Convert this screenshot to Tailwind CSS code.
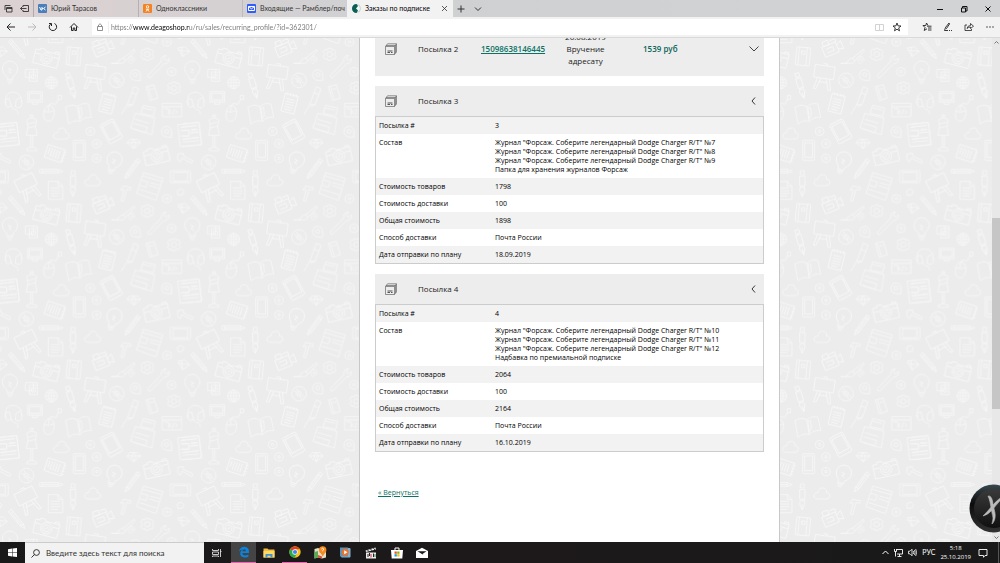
<!DOCTYPE html>
<html lang="ru">
<head>
<meta charset="utf-8">
<title>Заказы по подписке</title>
<script src="https://cdn.jsdelivr.net/npm/@tailwindcss/browser@4"></script>
</head>
<body class="flex h-screen flex-col overflow-hidden bg-white font-['Open_Sans','Noto_Sans',sans-serif] text-[7px] text-[#222]">

<!-- Tab strip -->
<header class="flex h-[17px] shrink-0 items-stretch bg-linear-to-r from-[#dcd1d2] via-[#cfd0d2] via-40% to-[#d2d3d5] font-[Lato,sans-serif] text-[#333]">
  <div class="flex w-[34px] items-center justify-between border-r border-[#b0a9aa] pr-1 pl-1">
    <button aria-label="Отложенные вкладки"><svg class="size-[9px]" viewBox="0 0 9 9" fill="none" stroke="#333" stroke-width=".9"><path d="M1 6V1.500H6.500M2.500 3.500H8V8H2.500ZM2.500 4.500H8"/></svg></button>
    <button aria-label="Отложить вкладки"><svg class="size-[9px]" viewBox="0 0 9 9" fill="none" stroke="#333" stroke-width=".9"><path d="M3 3V1.500H8.500V7.500H3V6M6.500 4.500H.5M2.500 2.500L.5 4.500L2.500 6.500"/></svg></button>
  </div>
  <nav class="flex" aria-label="Вкладки">
    <button class="flex w-[105px] items-center gap-1 border-r border-[#b5b1b2] pl-1">
      <svg class="size-[9px] shrink-0" viewBox="0 0 9 9"><rect width="9" height="9" rx="1" fill="#4a7fbb"/><path d="M1.500 3L3 6H4V3M4 4.500H5M7.500 3L5.500 4.500L7.500 6" fill="none" stroke="#fff"/></svg>
      <span>Юрий Тарасов</span>
    </button>
    <button class="flex w-[104px] items-center gap-1 border-r border-[#bcbcbe] pl-1">
      <svg class="size-[9px] shrink-0" viewBox="0 0 9 9"><rect width="9" height="9" rx="1" fill="#f58220"/><circle cx="4.500" cy="2.800" r="1.200" fill="none" stroke="#fff"/><path d="M2.800 5Q4.500 6 6.200 5M4.500 5.500L3 7.500M4.500 5.500L6 7.500" fill="none" stroke="#fff"/></svg>
      <span>Одноклассники</span>
    </button>
    <button class="flex w-[104px] items-center gap-1 pl-1 whitespace-nowrap">
      <svg class="size-[9px] shrink-0" viewBox="0 0 9 9"><rect width="9" height="9" rx="1" fill="#315efb"/><path d="M1.500 2.500H7.500V6.500H1.500ZM1.500 2.500L4.500 4.800L7.500 2.500" fill="none" stroke="#fff"/></svg>
      <span>Входящие — Рамблер/поч</span>
    </button>
    <button class="flex w-[106px] items-center gap-1 bg-[#f2f2f2] pr-[5px] pl-[5px] text-black">
      <svg class="size-[9px] shrink-0" viewBox="0 0 9 9"><circle cx="4.500" cy="4.500" r="4" fill="#f7f7f7" stroke="#bcd4ce"/><path d="M4.500 0A4.500 4.500 0 0 0 4.500 9L6 6.500L4 4.500L6 2Z" fill="#0b5f55"/></svg>
      <span class="grow text-left">Заказы по подписке</span>
      <svg class="size-[7px]" viewBox="0 0 7 7" stroke="#333" stroke-width=".8"><path d="M1 1L6 6M6 1L1 6"/></svg>
    </button>
  </nav>
  <div class="flex items-center gap-[9px] pl-1">
    <button aria-label="Новая вкладка"><svg class="size-[8px]" viewBox="0 0 8 8" stroke="#333"><path d="M4 .5V7.500M.5 4H7.500"/></svg></button>
    <button aria-label="Список вкладок"><svg class="size-[8px]" viewBox="0 0 8 8" fill="none" stroke="#333"><path d="M1 2.500L4 5.500L7 2.500"/></svg></button>
  </div>
  <div class="ml-auto flex items-center gap-4 pr-2">
    <button aria-label="Свернуть"><svg class="size-[8px]" viewBox="0 0 8 8" stroke="#111"><path d="M1 4.500H7"/></svg></button>
    <button aria-label="Восстановить"><svg class="size-[8px]" viewBox="0 0 8 8" fill="none" stroke="#111"><path d="M1.500 3H5.500V7H1.500ZM2.500 3V1.500H7V6H5.500"/></svg></button>
    <button aria-label="Закрыть"><svg class="size-[8px]" viewBox="0 0 8 8" stroke="#111"><path d="M1.500 1.500L6.500 6.500M6.500 1.500L1.500 6.500"/></svg></button>
  </div>
</header>

<!-- Address bar -->
<div class="flex h-[21px] shrink-0 items-center border-b border-[#d9d9d9] bg-[#f2f2f2] pl-[6px]">
  <div class="flex w-[86px] gap-[11px]">
    <button aria-label="Назад"><svg class="size-[10px]" viewBox="0 0 10 10" fill="none" stroke="#222"><path d="M9 5H1M4.500 1.500L1 5L4.500 8.500"/></svg></button>
    <button aria-label="Вперед"><svg class="size-[10px]" viewBox="0 0 10 10" fill="none" stroke="#bbb"><path d="M1 5H9M5.500 1.500L9 5L5.500 8.500"/></svg></button>
    <button aria-label="Обновить"><svg class="size-[10px]" viewBox="0 0 10 10" fill="none" stroke="#222"><path d="M6.500 1.500A3.700 3.700 0 1 1 3 1.700M3.500 4V1.500H1"/></svg></button>
    <button aria-label="Домой"><svg class="size-[10px]" viewBox="0 0 10 10" fill="none" stroke="#222"><path d="M1 5.500L5 1.500L9 5.500M2.500 4.500V8.500H4.200V6H5.800V8.500H7.500V4.500"/></svg></button>
  </div>
  <div class="flex h-4 grow items-center bg-white pr-[6px] pl-1">
    <svg class="size-[8px] shrink-0" viewBox="0 0 8 8" fill="none" stroke="#777" stroke-width=".8"><path d="M1.500 3.500H6.500V7.500H1.500ZM2.500 3.500V2Q4 -.5 5.500 2V3.500"/></svg>
    <span class="ml-1 h-3 border-l border-[#eee]"></span>
    <input type="text" aria-label="Адрес" value="https://www.deagoshop.ru/ru/sales/recurring_profile/?id=362301/" class="grow bg-[linear-gradient(90deg,#777_24px,#000_24px,#000_80px,#777_80px)] bg-clip-text pl-[2px] font-[Lato,sans-serif] text-[7px] text-transparent outline-none">
    <button aria-label="Режим чтения" class="mr-2"><svg class="size-[9px]" viewBox="0 0 9 9" fill="none" stroke="#c8c8c8" stroke-width=".8"><path d="M.5 1.500H4.500V7.500H.5ZM4.500 1.500H8.500V7.500H4.500"/></svg></button>
    <button aria-label="В избранное"><svg class="size-[10px]" viewBox="0 0 10 10" fill="none" stroke="#222" stroke-width=".9"><path d="M5 1L6.100 3.900L9 4L6.700 5.900L7.500 8.800L5 7.200L2.500 8.800L3.300 5.900L1 4L3.900 3.900Z"/></svg></button>
  </div>
  <div class="flex w-[92px] items-center justify-between pr-[5px] pl-[14px]">
    <button aria-label="Избранное"><svg class="size-[10px]" viewBox="0 0 10 10" fill="none" stroke="#222" stroke-width=".9"><path d="M6 3.500L4.500 1L3.800 3.500H1L3 5.500L2.200 8.500L5 6.800M5 4.200H9.500M6 6H9.500M6 8H9.500"/></svg></button>
    <button aria-label="Заметки"><svg class="size-[10px]" viewBox="0 0 10 10" fill="none" stroke="#222" stroke-width=".9"><path d="M6 1L2.500 5.500L3.500 6.500L6.500 2ZM2.500 5.500L1.500 8.500H5M6 8.500H7M8 8.500H9"/></svg></button>
    <button aria-label="Поделиться"><svg class="size-[10px]" viewBox="0 0 10 10" fill="none" stroke="#222" stroke-width=".8"><path d="M3 3H1V8.500H7.500V7M3 6.500Q3.500 3.500 6.500 3.500V1.500L9.500 4.200L6.500 6.500V5Q4.500 5 3 6.500"/></svg></button>
    <button aria-label="Параметры"><svg class="size-[10px]" viewBox="0 0 10 10" fill="#222"><circle cx="2" cy="5" r=".7"/><circle cx="5" cy="5" r=".7"/><circle cx="8" cy="5" r=".7"/></svg></button>
  </div>
</div>

<!-- Page -->
<div class="relative flex min-h-0 grow overflow-hidden">
  <svg class="absolute inset-0 size-full" aria-hidden="true">
    <defs>
      <g id="gear"><path d="M-5 -18H5L7 -13L14 -15L19 -7L15 0L19 7L14 15L7 13L5 18H-5L-7 13L-14 15L-19 7L-15 0L-19 -7L-14 -15L-7 -13Z"/><circle r="8"/></g>
      <g id="cog"><path d="M-4 -12H4L11 -8L13 0L11 8L4 12H-4L-11 8L-13 0L-11 -8Z"/><circle r="4"/></g>
      <g id="camera"><path d="M-37 -20H-24V-26H-10L-5 -20H37V22H-37ZM-37 -8H-18M18 -8H37M22 -20V-26H34V-20"/><circle r="17"/><circle r="10"/><path d="M-4 4L4 -4"/></g>
      <g id="bulb"><path d="M-9 24V16Q-23 6 -23 -8A23 23 0 0 1 23 -8Q23 6 9 16V24ZM-9 29H9M-6 35H6M-6 -8L4 -5L-4 2L5 6"/></g>
      <g id="pencil"><path d="M-5 -34H6V22L0 36L-5 22ZM-5 -26H6M0 -26V22M-5 22H6"/></g>
      <g id="pen"><path d="M-6 -38H6V-26H-6ZM-8 -22H8V8H-8ZM-6 12H6L8 22L0 40L-8 22ZM0 22V40"/></g>
      <g id="easel"><path d="M-30 -28H30V10H-30ZM-6 -34H6V-28M-18 10L-26 44H-18L-8 10M18 10L26 44H18L8 10M-14 22H14"/></g>
      <g id="disc"><circle r="22"/><circle r="7"/><circle r="2"/><path d="M-15 -8L-7 -3M8 4L16 10M-8 -16L-3 -7M3 7L8 17"/></g>
      <g id="book"><path d="M-20 -27H22V27H-20ZM-12 -27V27M12 -27V27M-4 -16H6V-6H-4Z"/></g>
      <g id="video"><path d="M-26 -8H18V24H-26ZM18 2L34 -6V20L18 14M-20 -22H-2V-8H-20ZM2 -18H20V-8M-16 2H6V14H-16"/></g>
      <g id="brush"><path d="M34 -22L2 4L8 12L36 -16ZM2 4Q-12 6 -14 18Q-20 20 -34 20H-8Q8 20 8 12"/></g>
      <g id="wrench"><path d="M-30 28L10 -14Q8 -30 24 -32L18 -22L25 -16L33 -24Q36 -8 18 -6L-22 34Q-30 38 -30 28Z"/></g>
      <g id="cloud"><path d="M-14 15Q-26 12 -22 2Q-18 -6 -11 -4Q-8 -20 6 -18Q17 -14 14 -4Q26 -4 24 8Q22 15 14 15Z"/></g>
      <g id="notes"><path d="M-20 -26H20V28H-20ZM-13 -31V-22M-4 -31V-22M5 -31V-22M14 -31V-22M-13 -12H13M-13 -4H13M-13 4H13M-13 12H13M-13 20H8"/></g>
      <g id="pin"><path d="M0 17Q-16 14 -15 0A15 15 0 0 1 15 0V18Z"/><circle r="6"/></g>
      <g id="tile" fill="none" stroke="#f7f7f7" stroke-width="2.500" stroke-linejoin="round">
        <use href="#pencil" transform="translate(51 40) rotate(-40)"/>
        <use href="#camera" transform="translate(139 67) rotate(14)"/>
        <use href="#book" transform="translate(220 61) rotate(5)"/>
        <use href="#video" transform="translate(304 32) rotate(-22)"/>
        <use href="#brush" transform="translate(368 62)"/>
        <use href="#pin" transform="translate(395 70) rotate(60) scale(.6)"/>
        <use href="#gear" transform="translate(442 55)"/>
        <use href="#wrench" transform="translate(474 90)"/>
        <use href="#cog" transform="translate(501 18)"/>
        <use href="#cog" transform="translate(515 107)"/>
        <path d="M534 36L555 32L569 46L548 62ZM534 42L569 46M545 34L548 60"/>
        <use href="#bulb" transform="translate(30 106)"/>
        <path d="M76 100H100V124H76ZM88 108H112V136H88ZM94 116H106V128H94ZM100 100H112V108"/>
        <g transform="translate(154 140)"><circle r="18"/><ellipse rx="8" ry="18"/><path d="M-18 0H18M-15 -9H15M-15 9H15M0 -18V18"/></g>
        <use href="#pen" transform="translate(213 148) rotate(-16)"/>
        <use href="#easel" transform="translate(284 117) rotate(8)"/>
        <use href="#disc" transform="translate(350 133)"/>
        <use href="#pin" transform="translate(406 116)"/>
        <use href="#gear" transform="translate(522 156)"/>
        <path d="M18 206Q10 168 40 168Q68 172 64 200M18 190Q10 200 22 214L34 210L28 188ZM64 184L48 192L46 212L58 216Q70 206 64 190M34 210Q40 224 48 220Q54 224 54 234"/>
        <path d="M83 167H127V198H83ZM88 172H122V192H88ZM98 198V205H112V198"/>
        <path d="M147 208Q132 212 131 236Q131 256 146 256Q162 252 163 230Q162 210 147 208ZM147 208L145 226M133 226Q146 232 162 224M148 208Q150 200 162 204Q172 206 170 196L178 190M174 178L184 178L184 190L174 190Z"/>
        <path d="M197 214Q216 202 232 212Q248 198 266 204L274 244Q252 242 240 256Q222 250 206 264ZM232 212L240 256M236 216L244 214L246 238L240 248Z"/>
        <use href="#notes" transform="translate(322 202) rotate(14)"/>
        <path d="M402 152L416 158L398 206H382ZM382 206L364 236M398 206L384 212M396 170L410 176"/>
        <path d="M438 152L462 146L474 186L450 194ZM444 152L456 190M450 160L462 158"/>
        <path d="M487 202H545V242H487ZM487 212H545M492 218H506V236M514 222L508 228L514 234M526 222L532 228L526 234M522 220L518 236"/>
        <path d="M430 208L466 216L460 240L422 232ZM406 232L464 246L456 296L392 276ZM406 250L448 262M402 262L442 274L436 290L398 278M430 216L458 222"/>
        <path d="M-14 266L50 259L58 326L-6 332ZM-8 274L44 268M-6 284L20 282V300H-6M26 282L46 280M26 290L48 288M0 310L50 304M2 318L50 314"/>
        <path d="M533 266L597 259L605 326L541 332ZM541 274L591 268M541 284H567V300H541M573 282L593 280M573 290L595 288M547 310L597 304"/>
        <path d="M90 242H100L98 236H92ZM80 252Q96 240 110 252L106 270L111 298H79L84 270ZM84 264L106 258M84 276L108 270M92 300V334M98 300V334M80 344V338L92 334H98L110 338V344Z"/>
        <use href="#cloud" transform="translate(183 294)"/>
        <use href="#cog" transform="translate(271 286)"/>
        <g transform="translate(334 286) rotate(-28)"><rect x="-22" y="-32" width="44" height="64" rx="4"/><rect x="-17" y="-25" width="34" height="46"/></g>
        <use href="#pin" transform="translate(500 286)"/>
        <use href="#cog" transform="translate(290 323)"/><use href="#cog" transform="translate(290 367)"/>
        <path d="M381 320L389 310H413L422 320L402 338ZM381 320H422M395 320L402 338L408 320L401 310Z"/>
        <use href="#camera" transform="translate(470 360) rotate(-12)"/>
        <use href="#notes" transform="translate(165 353) rotate(108)"/>
        <g transform="translate(238 343)"><rect x="-18" y="-30" width="36" height="60" rx="4"/><rect x="-12" y="-23" width="24" height="44"/></g>
        <use href="#bulb" transform="translate(341 378) rotate(18)"/>
        <use href="#disc" transform="translate(79 379)"/>
        <use href="#pencil" transform="translate(396 398) rotate(36)"/>
        <use href="#pencil" transform="translate(153 406) rotate(-90)"/>
        <path d="M533 354L550 352V360L579 374L576 382L546 366L540 378L533 370Z"/>
        <use href="#easel" transform="translate(81 448) rotate(-26)"/>
        <path d="M145 436H174L188 450V490H145ZM174 436V450H188M152 456H180M152 464H180M152 472H180M152 480H174"/>
        <use href="#pen" transform="translate(219 442)"/>
        <use href="#cloud" transform="translate(277 434)"/>
        <path d="M430 410L489 427L468 493L410 472ZM428 420L484 436M424 432L444 438L438 454L420 448M450 440L480 448M448 448L478 458M418 460L470 476"/>
        <path d="M362 462L370 450L392 454V462L380 460L370 496L363 494L372 460Z"/>
        <rect x="511" y="404" width="61" height="36" rx="4"/><rect x="520" y="409" width="43" height="26"/>
        <path d="M532 464L544 458L552 466L548 476L534 478Z"/>
      </g>
      <pattern id="doodles" width="547" height="470" patternUnits="userSpaceOnUse" patternTransform="translate(0 -2) scale(.33333)">
        <use href="#tile"/><use href="#tile" x="-547"/><use href="#tile" y="-470"/><use href="#tile" x="-547" y="-470"/>
      </pattern>
    </defs>
    <rect width="100%" height="100%" fill="#ececec"/>
    <rect width="100%" height="100%" fill="url(#doodles)"/>
  </svg>

  <svg class="hidden"><symbol id="parcel" viewBox="0 0 12 12"><path d="M.5 3.500H9.500V11.500H.5ZM.5 3.500L2.500 .8H11.500L9.500 3.500M11.500 .8V9L9.500 11.500M1 2.500H10.500V10" fill="none" stroke="#666" stroke-width=".7"/><path d="M2.500 8H7.500M2.500 9.500H5M6 9.500H7.500" stroke="#555" stroke-width="1"/></symbol></svg>

  <main class="relative grid min-w-0 grow grid-cols-[359fr_421px_212fr]">
    <div class="col-start-2 flex flex-col gap-[10px] border-x border-[#c8c8c8] bg-white pr-[15px] pl-[15px] font-medium">

      <section class="-mt-4 grid h-[54px] shrink-0 grid-cols-[33px_63px_66px_77px_1fr_10px] items-center bg-[#ededed] pr-[5px] pl-[10px] text-[8px] leading-[12px]">
        <svg class="size-[12px]"><use href="#parcel"/></svg>
        <h2>Посылка 2</h2>
        <a href="#" class="font-semibold text-[#0b7265] underline">15098638146445</a>
        <p class="text-center">26.08.2019<br>Вручение<br>адресату</p>
        <p class="pl-[19px] font-semibold text-[#0b6659]">1539 руб</p>
        <button aria-label="Развернуть"><svg class="size-[10px]" viewBox="0 0 10 10" fill="none" stroke="#333" stroke-width=".9"><path d="M.5 2.500L5 7L9.500 2.500"/></svg></button>
      </section>

      <section>
        <div class="grid h-[30px] grid-cols-[33px_1fr_10px] items-center bg-[#ededed] pr-[5px] pl-[10px] text-[8px]">
          <svg class="size-[12px]"><use href="#parcel"/></svg>
          <h2>Посылка 3</h2>
          <button aria-label="Свернуть"><svg class="size-[10px]" viewBox="0 0 10 10" fill="none" stroke="#222" stroke-width=".9"><path d="M6 1.500L3 5L6 8.500"/></svg></button>
        </div>
        <div class="border border-[#ccc] text-black">
          <table class="w-full text-left leading-[9px] [&_td]:py-1 [&_th]:w-[119px] [&_th]:py-1 [&_th]:pl-[3px] [&_th]:align-top [&_th]:font-medium [&_tr:nth-child(odd)]:bg-[#f2f2f2]">
            <tr><th scope="row">Посылка #</th><td>3</td></tr>
            <tr><th scope="row">Состав</th><td>Журнал "Форсаж. Соберите легендарный Dodge Charger R/T" №7<br>Журнал "Форсаж. Соберите легендарный Dodge Charger R/T" №8<br>Журнал "Форсаж. Соберите легендарный Dodge Charger R/T" №9<br>Папка для хранения журналов Форсаж</td></tr>
            <tr><th scope="row">Стоимость товаров</th><td>1798</td></tr>
            <tr><th scope="row">Стоимость доставки</th><td>100</td></tr>
            <tr><th scope="row">Общая стоимость</th><td>1898</td></tr>
            <tr><th scope="row">Способ доставки</th><td>Почта России</td></tr>
            <tr><th scope="row">Дата отправки по плану</th><td>18.09.2019</td></tr>
          </table>
        </div>
      </section>

      <section>
        <div class="grid h-[30px] grid-cols-[33px_1fr_10px] items-center bg-[#ededed] pr-[5px] pl-[10px] text-[8px]">
          <svg class="size-[12px]"><use href="#parcel"/></svg>
          <h2>Посылка 4</h2>
          <button aria-label="Свернуть"><svg class="size-[10px]" viewBox="0 0 10 10" fill="none" stroke="#222" stroke-width=".9"><path d="M6 1.500L3 5L6 8.500"/></svg></button>
        </div>
        <div class="border border-[#ccc] text-black">
          <table class="w-full text-left leading-[9px] [&_td]:py-1 [&_th]:w-[119px] [&_th]:py-1 [&_th]:pl-[3px] [&_th]:align-top [&_th]:font-medium [&_tr:nth-child(odd)]:bg-[#f2f2f2]">
            <tr><th scope="row">Посылка #</th><td>4</td></tr>
            <tr><th scope="row">Состав</th><td>Журнал "Форсаж. Соберите легендарный Dodge Charger R/T" №10<br>Журнал "Форсаж. Соберите легендарный Dodge Charger R/T" №11<br>Журнал "Форсаж. Соберите легендарный Dodge Charger R/T" №12<br>Надбавка по премиальной подписке</td></tr>
            <tr><th scope="row">Стоимость товаров</th><td>2064</td></tr>
            <tr><th scope="row">Стоимость доставки</th><td>100</td></tr>
            <tr><th scope="row">Общая стоимость</th><td>2164</td></tr>
            <tr><th scope="row">Способ доставки</th><td>Почта России</td></tr>
            <tr><th scope="row">Дата отправки по плану</th><td>16.10.2019</td></tr>
          </table>
        </div>
      </section>

      <p class="pt-[26px] pl-[3px]"><a href="#" class="text-[#0b7265] underline">« Вернуться</a></p>
    </div>
  </main>

  <!-- Scrollbar -->
  <div class="relative flex w-2 shrink-0 flex-col items-center bg-[#e8e8e8]">
    <svg class="my-px size-[7px]" viewBox="0 0 7 7" fill="none" stroke="#777"><path d="M1.500 4.500L3.500 2.500L5.500 4.500"/></svg>
    <div class="flex w-full grow flex-col">
      <div class="grow-171"></div>
      <div class="grow-191 bg-[#c6c6c6]"></div>
      <div class="grow-124"></div>
    </div>
    <svg class="my-px size-[7px]" viewBox="0 0 7 7" fill="none" stroke="#777"><path d="M1.500 2.500L3.500 4.500L5.500 2.500"/></svg>
  </div>

  <!-- Floating desktop widget -->
  <svg class="absolute -right-[18px] bottom-[9px] size-[49px]" viewBox="0 0 49 49" aria-hidden="true">
    <defs><linearGradient id="rim" x2="0" y2="1"><stop stop-color="#39494f"/><stop offset=".4" stop-color="#0c0c0c"/><stop offset="1" stop-color="#333"/></linearGradient><linearGradient id="face" x2="0" y2="1"><stop stop-color="#3a3a3a"/><stop offset="1" stop-color="#101010"/></linearGradient></defs>
    <circle cx="24.500" cy="24.500" r="24" fill="url(#rim)"/>
    <circle cx="24.500" cy="24.500" r="19.500" fill="url(#face)"/>
    <path d="M19 12Q23 11 24 20L26 29Q27 36 23 40Q25 34 23 29L21 18Q20 14 19 12ZM37 11Q30 17 24 25Q19 31 14 32Q19 27 23 22Q29 14 37 11Z" fill="#bbb" stroke="#bbb" stroke-width=".6"/>
  </svg>
</div>

<!-- Taskbar -->
<footer class="flex h-[21px] shrink-0 items-stretch bg-linear-to-r from-[#191919] via-[#1d191a] to-[#191919] text-white">
  <button aria-label="Пуск" class="flex w-[25px] items-center justify-center"><svg class="size-[9px]" viewBox="0 0 9 9" fill="#fff"><path d="M0 1.200L4 .6V4.200H0ZM4.500 .5L9 0V4.200H4.500ZM0 4.800H4V8.400L0 7.800ZM4.500 4.800H9V9L4.500 8.500Z"/></svg></button>
  <label class="flex w-[179px] items-center gap-[6px] border-t border-[#ccc] bg-[#f2f2f2] pl-[6px]">
    <svg class="size-[9px] shrink-0" viewBox="0 0 9 9" fill="none" stroke="#222" stroke-width=".9"><circle cx="5.500" cy="3.500" r="2.900"/><path d="M3.400 5.600L.5 8.500"/></svg>
    <input type="text" aria-label="Поиск" placeholder="Введите здесь текст для поиска" class="w-full font-[Lato,sans-serif] text-[8px] outline-none placeholder:text-[#333]">
  </label>
  <button aria-label="Представление задач" class="flex w-[25px] items-center justify-center"><svg class="size-[10px]" viewBox="0 0 10 10" fill="none" stroke="#ddd" stroke-width=".9"><path d="M.5 1V2.500H6.500V1M.5 4H6.500V6.500H.5ZM.5 9V8H6.500V9M8.500 1V9M8 3.500H9.500"/></svg></button>
  <div class="flex pl-[2px]">
    <button aria-label="Edge" class="flex w-[25px] items-center justify-center border-b border-[#e667b0] bg-[#444]"><svg class="size-[12px]" viewBox="0 0 12 12"><path d="M1 5.500Q2 .8 6.300 .8Q11 1 11 6V7H4.200Q4.500 9.500 7.200 9.500Q9 9.500 10.400 8.600V10.800Q8.600 11.600 6.500 11.500Q2 11 2.200 7Q2.400 4.600 4.600 3.500Q2.500 3.700 1 5.500ZM4.300 5.300H8Q8 3.300 6.300 3.300Q4.600 3.400 4.300 5.300Z" fill="#0a84e0" fill-rule="evenodd"/></svg></button>
    <button aria-label="Проводник" class="flex w-[26px] items-center justify-center"><svg class="size-[12px]" viewBox="0 0 12 12"><path d="M.5 1.500H4.500L5.500 2.500H11.500V10.500H.5Z" fill="#f2bd3f"/><path d="M.5 4H11.500V10.500H.5Z" fill="#ffd968"/><path d="M2.500 10.500V7H9.500V10.500H7.500V8.700H4.500V10.500Z" fill="#3c93d6"/></svg></button>
    <button aria-label="Chrome" class="flex w-[25px] items-center justify-center border-b border-[#e667b0]"><svg class="size-[12px]" viewBox="0 0 12 12"><circle cx="6" cy="6" r="5.700" fill="#fbc116"/><path d="M6 6L1.100 3.200A5.700 5.700 0 0 1 11 3.300H6Z" fill="#e33b2e"/><path d="M6 6L1.100 3.200A5.700 5.700 0 0 0 5.500 11.700L8.300 7.300Z" fill="#2da94f"/><circle cx="6" cy="6" r="2.700" fill="#fff"/><circle cx="6" cy="6" r="2.100" fill="#3f83ee"/></svg></button>
    <button aria-label="Карты" class="flex w-[26px] items-center justify-center"><svg class="size-[13px]" viewBox="0 0 13 13"><path d="M.5 3L4 2L8 3.500L12 2V11.500L8 12.500L4 11.500L.5 12.500Z" fill="#e4dfc6"/><path d="M.5 6L4 5V11.500L.5 12.500Z" fill="#58ad4f"/><path d="M4 9L8 10.500V12.500L4 11.500Z" fill="#d75237"/><circle cx="8.700" cy="4" r="3.700" fill="#f58a1f"/><path d="M6.500 6.500L8.700 10.500L11 6.500Z" fill="#f58a1f"/><path d="M7.500 3Q8.700 1.500 9.700 3Q9.700 4 8.700 4.500V5.200" fill="none" stroke="#fff"/></svg></button>
    <button aria-label="Проигрыватель" class="flex w-[25px] items-center justify-center"><svg class="size-[11px]" viewBox="0 0 11 11"><rect x="1" y="1" width="9.500" height="9.500" rx="1" fill="#83b4d8"/><rect y="0.500" width="8" height="9" fill="#5b91bc"/><circle cx="5.300" cy="5.300" r="3.500" fill="#ee7425"/><path d="M4.200 3.300L7.500 5.300L4.200 7.300Z" fill="#fff"/></svg></button>
    <button aria-label="Видео" class="flex w-[26px] items-center justify-center"><svg class="size-[12px]" viewBox="0 0 12 12"><path d="M.5 3.500L10.500 .5L11 2.500L1 5ZM1 5.500H11V11.500H1Z" fill="#eee"/><path d="M2.500 3L4 4.500M5.500 2L7 3.800M8.500 1.200L10 3M3 7V10M4.500 6V9M8.500 6.500V10" stroke="#222"/><path d="M6 7V10.500" stroke="#c33"/><path d="M10 7V10" stroke="#398b3c"/></svg></button>
    <button aria-label="Магазин" class="flex w-[25px] items-center justify-center"><svg class="size-[12px]" viewBox="0 0 12 12"><path d="M4 3V1H8V3" fill="none" stroke="#fff"/><path d="M0 3H12L11.300 11.500H.7Z" fill="#fff"/><path d="M3.500 4.500H5.800V6.800H3.500Z" fill="#f25022"/><path d="M6.200 4.500H8.500V6.800H6.200Z" fill="#7fba00"/><path d="M3.500 7.200H5.800V9.500H3.500Z" fill="#00a4ef"/><path d="M6.200 7.200H8.500V9.500H6.200Z" fill="#ffb900"/></svg></button>
    <button aria-label="Почта" class="flex w-[26px] items-center justify-center"><svg class="size-[12px]" viewBox="0 0 12 12"><path d="M0 4L6 .8L12 4V11H0Z" fill="#fff"/><path d="M1.500 4.300H10.500L6.500 7L7.500 8L1.500 4.300Z" fill="#1a1a1a"/></svg></button>
  </div>
  <div class="mr-px ml-auto flex items-center gap-[5px] border-r border-[#555] pr-[10px]">
    <svg class="size-[7px]" viewBox="0 0 7 7" fill="none" stroke="#fff"><path d="M.5 5L3.500 2L6.500 5"/></svg>
    <svg class="size-[9px]" viewBox="0 0 9 9" fill="none" stroke="#fff" stroke-width=".9"><path d="M2.500 1.500H8.500V6H3M5.500 6V8M3.500 8.500H7.500M.5 1V3.500H2.500V1M1.500 3.500V8.500"/></svg>
    <svg class="size-[9px]" viewBox="0 0 9 9" fill="none" stroke="#fff" stroke-width=".8"><path d="M.5 3.200H2L4 1.200V7.800L2 5.800H.5ZM5.300 3Q6 4.500 5.300 6M6.500 2Q7.700 4.500 6.500 7M7.700 1Q9.400 4.500 7.700 8"/></svg>
    <span class="font-[Lato,sans-serif]">РУС</span>
    <time class="text-center text-[6px] leading-[9px]" datetime="2019-10-25T05:18">5:18<br>25.10.2019</time>
    <button aria-label="Уведомления" class="ml-[2px]"><svg class="size-[10px]" viewBox="0 0 10 10" fill="none" stroke="#fff" stroke-width=".9"><path d="M1 1.500H9V7.500H7L5.500 9.300V7.500H1Z"/></svg></button>
  </div>
</footer>
</body>
</html>
